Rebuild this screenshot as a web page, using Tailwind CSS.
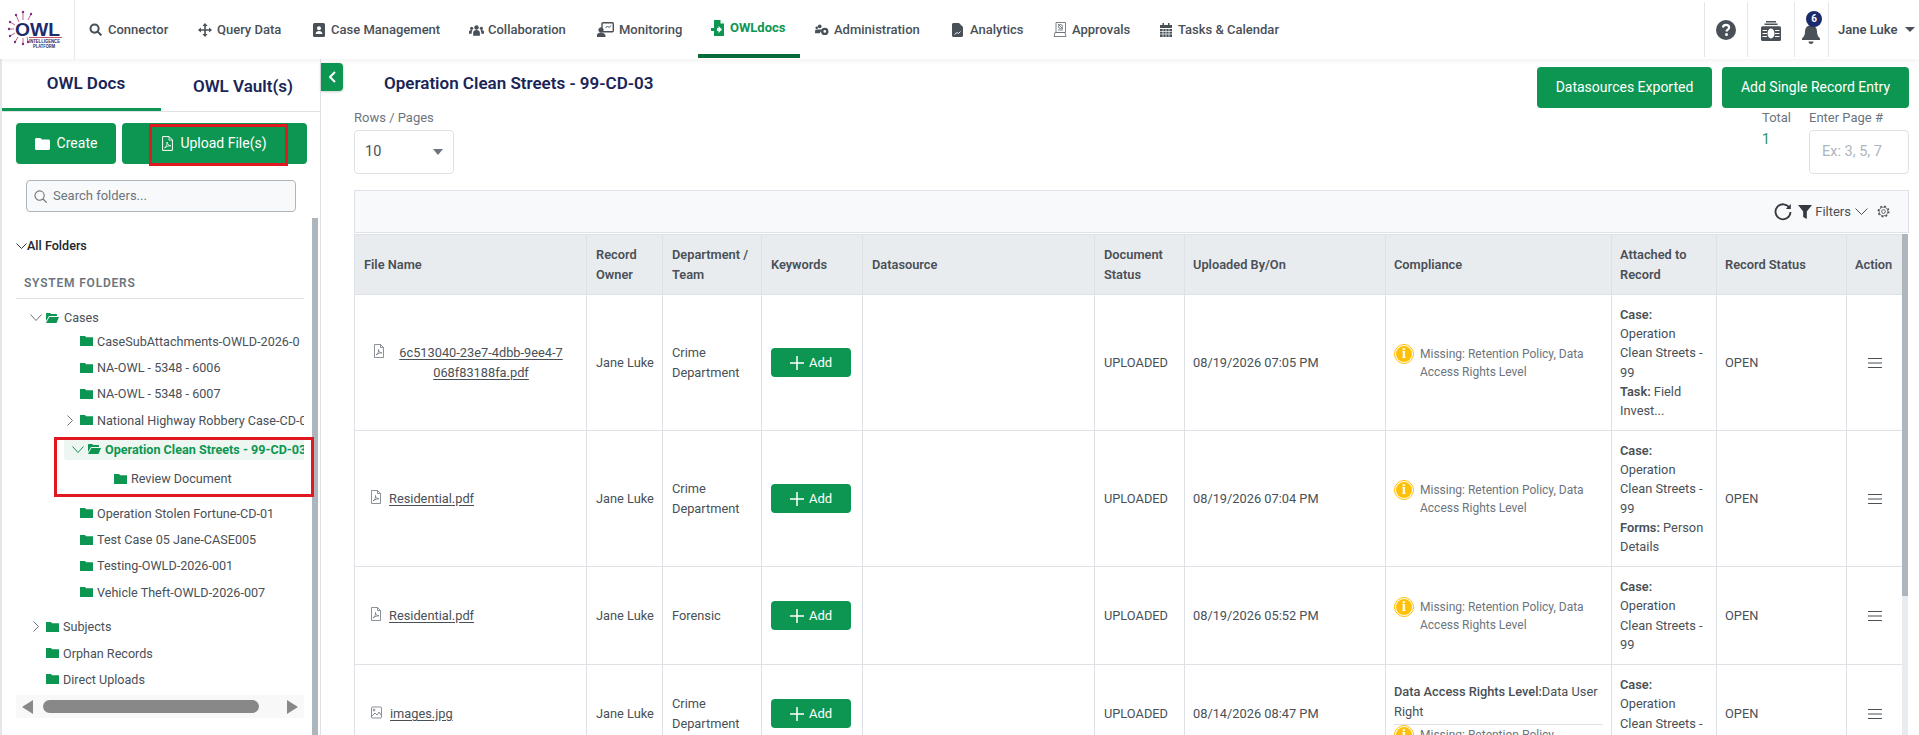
<!DOCTYPE html>
<html lang="en">
<head>
  <meta charset="UTF-8" />
  <title>OWLdocs</title>
  <script src="https://cdn.jsdelivr.net/npm/@tailwindcss/browser@4"></script>
</head>
<body class="h-[735px] overflow-hidden bg-white font-['Roboto',sans-serif] text-[12.8px] leading-[19.2px] text-[#495057]">

  <!-- Top nav -->
  <header class="relative z-10 flex h-[59px] items-stretch bg-white shadow-[0_2px_6px_rgba(0,0,0,0.06)]">
    <div class="w-[75px] shrink-0 border-r border-[#e4e6e9]">
      <svg class="h-[59px] w-[74px]" viewBox="0 0 74 59" fill="none">
        <g stroke="#b0406c" stroke-width=".8">
          <path d="M19 22 16 15M23 20V12M28 20l3-6M15 25l-5-3M14 29H9M15 33l-5 3M18 37l-3 5M23 38v6M27 37l1 5" />
        </g>
        <g fill="#7b2d86">
          <circle cx="16" cy="15" r="1.2" /><circle cx="23" cy="12" r="1.2" /><circle cx="31" cy="14" r="1.2" /><circle cx="10" cy="22" r="1.2" /><circle cx="9" cy="29" r="1.2" /><circle cx="10" cy="36" r="1.2" /><circle cx="15" cy="42" r="1.2" /><circle cx="23" cy="44" r="1.2" /><circle cx="28" cy="42" r="1.2" />
        </g>
        <path d="M29 37.500H62" stroke="#c2405a" stroke-width=".9" />
        <text x="15" y="35.500" font-family="Liberation Sans" font-size="19" font-weight="700" fill="#1f2a6b" textLength="45" lengthAdjust="spacingAndGlyphs">OWL</text>
        <text x="29" y="42.500" font-family="Liberation Sans" font-size="4.500" font-weight="700" fill="#1f2a6b" textLength="31" lengthAdjust="spacingAndGlyphs">INTELLIGENCE</text>
        <text x="33" y="47.500" font-family="Liberation Sans" font-size="4.500" font-weight="700" fill="#1f2a6b" textLength="22" lengthAdjust="spacingAndGlyphs">PLATFORM</text>
      </svg>
    </div>

    <nav class="flex flex-1 items-stretch text-[13px] font-medium">
      <a class="flex w-[109px] items-center gap-[6px] pl-[14px]">
        <svg class="h-[13px] w-[13px] fill-none stroke-[#495057] stroke-[2.2]" viewBox="0 0 14 14"><circle cx="6" cy="6" r="4.400" /><path d="m9.300 9.300 4 4" /></svg>Connector
      </a>
      <a class="flex w-[115px] items-center gap-[5px] pl-[14px]">
        <svg class="h-[14px] w-[14px] fill-[#495057]" viewBox="0 0 14 14"><path d="M7 0l2.600 2.900H7.800v3.300h3.300V4.400L14 7l-2.900 2.600V7.800H7.800v3.300h1.800L7 14l-2.600-2.900h1.800V7.800H2.900v1.800L0 7l2.900-2.600v1.800h3.300V2.900H4.400z" /></svg>Query Data
      </a>
      <a class="flex w-[156px] items-center gap-[6px] pl-[14px]">
        <svg class="h-[14px] w-[12px]" viewBox="0 0 12 14"><rect width="12" height="14" rx="1.500" fill="#495057" /><circle cx="6" cy="5.200" r="2" fill="#fff" /><path d="M2.600 11c0-2 1.600-3 3.400-3s3.400 1 3.400 3z" fill="#fff" /></svg>Case Management
      </a>
      <a class="flex w-[128px] items-center gap-[4px] pl-[14px]">
        <svg class="h-[12px] w-[15px] fill-[#495057]" viewBox="0 0 16 12"><circle cx="8" cy="3.400" r="2.400" /><circle cx="2.800" cy="4.200" r="1.700" /><circle cx="13.200" cy="4.200" r="1.700" /><path d="M4.400 12V9c0-1.800 1.500-2.900 3.600-2.900s3.600 1.100 3.600 2.900v3zM0 10V8c0-1 1-1.900 2.800-1.900.4 0 .6 0 .9.1-.5.6-.8 1.400-.8 2.300V10zM16 10V8c0-1-1-1.900-2.800-1.900-.4 0-.6 0-.9.1.5.6.8 1.400.8 2.300V10z" /></svg>Collaboration
      </a>
      <a class="flex w-[115px] items-center gap-[5px] pl-[14px]">
        <svg class="h-[15px] w-[17px] fill-none stroke-[#495057]" viewBox="0 0 17 15"><rect x="5" y=".7" width="11.300" height="9" rx="1" stroke-width="1.400" /><path d="m8.500 6 2-2 1.500 1.500L14 3.500" /><circle cx="4" cy="8" r="2.200" fill="#495057" /><path d="M0 15v-1.500C0 12 1.800 11 4 11s4 1 4 2.500V15z" fill="#495057" /></svg>Monitoring
      </a>
      <a class="relative flex w-[102px] items-center gap-[6px] pl-[13px] font-bold text-[#0d9651]">
        <svg class="-mt-[3px] h-[16px] w-[13px]" viewBox="0 0 13 16"><path d="M3 0h6.500L13 3.500V16H3v-5h4.500v2L11 9.500 7.500 6v2H3z" fill="#0d9651" /><path d="M0 8h6v3H0z" fill="#0d9651" /><path d="M9.500 0v3.500H13" fill="#fff" /></svg><span class="-mt-[3px]">OWLdocs</span>
        <span class="absolute inset-x-0 bottom-[1px] h-[4px] bg-[#056b3a]"></span>
      </a>
      <a class="ml-[1px] flex w-[137px] items-center gap-[5px] pl-[14px]">
        <svg class="h-[12px] w-[14px] fill-[#495057]" viewBox="0 0 15 13"><circle cx="5" cy="2.500" r="2" /><circle cx="1.800" cy="4" r="1.400" /><path d="M0 10V7.500C0 6.500 1 6 2 6h5v1L5 10z" /><circle cx="10.500" cy="8" r="4" /><circle cx="10.500" cy="8" r="1.400" fill="#fff" /></svg>Administration
      </a>
      <a class="flex w-[101px] items-center gap-[7px] pl-[14px]">
        <svg class="h-[14px] w-[11px] fill-[#495057]" viewBox="0 0 11 14"><path d="M0 1.500C0 .7.700 0 1.500 0H7l4 4v8.500c0 .8-.7 1.500-1.500 1.500h-8C.7 14 0 13.300 0 12.500z" /><path d="M2.500 11.500 5 9.500l1.500 1 2-2" stroke="#fff" fill="none" stroke-width=".9" /></svg>Analytics
      </a>
      <a class="flex w-[107px] items-center gap-[5px] pl-[14px]">
        <svg class="h-[15px] w-[14px] fill-none stroke-[#6c757d]" viewBox="0 0 14 15" stroke-width=".9"><path d="M3 .5h9.500v10H3z" /><circle cx="7.500" cy="4.500" r="2" /><path d="M5 8h5M1 14.500h12l-1-4H2z" /><path d="M5 2 10 7" /></svg>Approvals
      </a>
      <a class="flex items-center gap-[6px] pl-[14px]">
        <svg class="h-[14px] w-[12px] fill-[#495057]" viewBox="0 0 12 14"><path d="M2.500 0H4v2h4V0h1.500v2H12v3H0V2h2.500zM0 6h12v8H0z" /><path d="M0 8.500h12M0 11h12M3 6v8M6 6v8M9 6v8" stroke="#fff" stroke-width=".7" /></svg>Tasks &amp; Calendar
      </a>
    </nav>

    <div class="flex items-stretch">
      <div class="my-[2px] flex w-[43px] items-center justify-center border-l border-[#e4e6e9]">
        <svg class="h-[20px] w-[20px]" viewBox="0 0 20 20"><circle cx="10" cy="10" r="10" fill="#495057" /><path d="M7 7.600C7 5.800 8.400 4.800 10.100 4.800c1.700 0 3 1 3 2.600 0 2.200-2.500 2.200-2.500 4" fill="none" stroke="#fff" stroke-width="2.200" /><circle cx="10.500" cy="14.500" r="1.500" fill="#fff" /></svg>
      </div>
      <div class="my-[2px] flex w-[47px] items-center justify-center border-l border-[#e4e6e9]">
        <svg class="mt-[2px] h-[20px] w-[20px]" viewBox="0 0 20 20" fill="#495057"><path d="M5 0h10v1.400H5zM3.500 2.600h13V4h-13z" /><rect y="5.300" width="20" height="14.700" rx="1.500" /><ellipse cx="10" cy="12.500" rx="3.500" ry="5" fill="#fff" /><path d="M1.500 9.500H6M1.500 12.500H6M1.500 15.500H6M14 9.500h4.500M14 12.500h4.500M14 15.500h4.500" stroke="#fff" stroke-width="1.200" /></svg>
      </div>
      <div class="relative my-[2px] flex w-[34px] items-center justify-center border-l border-[#e4e6e9]">
        <svg class="ml-[-1px] mt-[8px] h-[21px] w-[18px] fill-[#495057]" viewBox="0 0 18 21"><path d="M9 0c.8 0 1.500.7 1.500 1.500v.7C13.500 3 15 5.500 15 8.500c0 3.500 1 5 3 7V17H0v-1.500c2-2 3-3.500 3-7C3 5.500 4.500 3 7.500 2.200v-.7C7.500.7 8.200 0 9 0zM6.500 18.500h5c0 1.500-1 2.500-2.500 2.500s-2.500-1-2.500-2.500z" /></svg>
        <span class="absolute left-[11px] top-[9px] flex h-[16px] w-[16px] items-center justify-center rounded-full bg-[#1a2a6c] text-[10px] font-bold leading-none text-white">6</span>
      </div>
      <div class="my-[2px] flex w-[91px] items-center border-l border-[#e4e6e9] pl-[9px] text-[13px] font-semibold">
        Jane Luke
        <span class="ml-[7px] h-0 w-0 border-x-[5px] border-t-[5px] border-x-transparent border-t-[#495057]"></span>
      </div>
    </div>
  </header>

  <div class="flex h-[676px]">
    <!-- Left panel -->
    <aside class="relative w-[321px] shrink-0 overflow-hidden border-l-2 border-r border-l-[#e4e7ea] border-r-[#dee2e6]">
      <div class="flex h-[53px] border-b border-[#dee2e6] text-[17px] font-semibold text-[#1a2557]">
        <div class="flex w-[159px] items-center justify-center border-b-[3px] border-[#0d9651] pl-[9px]">OWL Docs</div>
        <div class="flex w-[159px] items-center justify-center pl-[5px] pt-[3px]">OWL Vault(s)</div>
      </div>

      <div class="mt-[11px] flex gap-[6px] pl-[14px] pr-[13px] text-[14px] text-white">
        <button class="flex h-[41px] w-[100px] items-center justify-center gap-[7px] rounded-[4px] bg-[#0d9651]">
          <svg class="h-[12px] w-[15px] fill-white" viewBox="0 0 15 12"><path d="M1.500 0h4L7 1.500h6.500c.8 0 1.500.7 1.500 1.500v7.500c0 .8-.7 1.500-1.500 1.500h-12C.7 12 0 11.300 0 10.500v-9C0 .7.700 0 1.500 0z" /></svg>Create
        </button>
        <button class="flex h-[41px] flex-1 items-center justify-center gap-[7px] rounded-[4px] bg-[#0d9651]">
          <svg class="h-[15px] w-[11px] fill-none stroke-white" viewBox="0 0 11 15"><path d="M.6.6h6.500l3.300 3.300v10.500H.6z" /><path d="M7 .6v3.500h3.400M2.500 12c2-1.500 3-4 2.500-6 0 2 1.500 3.500 4 3.800-2-.2-4.500.6-6.500 2.200z" stroke-width=".8" /></svg>Upload File(s)
        </button>
      </div>

      <div class="ml-[24px] mt-[16px] flex h-[32px] w-[270px] items-center gap-[6px] rounded-[4px] border border-[#adb5bd] bg-[#f8f9fa] pl-[7px] text-[13px] text-[#6c757d]">
        <svg class="h-[13px] w-[13px] fill-none stroke-[#6c757d] stroke-[1.2]" viewBox="0 0 14 14"><circle cx="6" cy="6" r="5" /><path d="m9.700 9.700 4 4" /></svg>
        Search folders...
      </div>

      <div class="mt-[24px] h-[462px] text-[12.6px] leading-[19px]">
        <div class="flex h-[19px] items-center pl-[14px] font-medium text-[#212529]">
          <svg class="h-[6px] w-[11px] fill-none stroke-[#343a40]" viewBox="0 0 11 6"><path d="m.5.500 5 5 5-5" /></svg>All Folders
        </div>
        <div class="ml-[14px] mt-[19px] h-[25px] w-[288px] border-b border-[#dee2e6] pl-[8px] text-[12px] font-semibold tracking-[0.8px] text-[#6c757d]">SYSTEM FOLDERS</div>

        <!-- Cases -->
        <div class="mt-[8px] flex h-[21px] items-center pl-[28px]">
          <svg class="mr-[4px] h-[7px] w-[12px] fill-none stroke-[#6c757d]" viewBox="0 0 12 7"><path d="m.5.500 5.500 6 5.500-6" /></svg>
          <svg class="mr-[5px] h-[10px] w-[13px] fill-[#0d9651]" viewBox="0 0 13 10"><path d="M0 1c0-.6.400-1 1-1h3l1.200 1H10c.6 0 1 .4 1 1v1H3L0 8zM3.400 4H13l-2.500 6H0z" /></svg>Cases
        </div>

        <div class="relative w-[302px] overflow-hidden whitespace-nowrap">
          <div class="flex h-[26.4px] items-center pl-[78px]">
            <svg class="mr-[4px] h-[10px] w-[13px] shrink-0 fill-[#0d9651]" viewBox="0 0 13 10"><path d="M0 0h5l1.200 1.200H13V10H0z" /></svg>CaseSubAttachments-OWLD-2026-0
          </div>
          <div class="flex h-[26.4px] items-center pl-[78px]">
            <svg class="mr-[4px] h-[10px] w-[13px] shrink-0 fill-[#0d9651]" viewBox="0 0 13 10"><path d="M0 0h5l1.200 1.200H13V10H0z" /></svg>NA-OWL - 5348 - 6006
          </div>
          <div class="flex h-[26.4px] items-center pl-[78px]">
            <svg class="mr-[4px] h-[10px] w-[13px] shrink-0 fill-[#0d9651]" viewBox="0 0 13 10"><path d="M0 0h5l1.200 1.200H13V10H0z" /></svg>NA-OWL - 5348 - 6007
          </div>
          <div class="flex h-[26.4px] items-center pl-[65px]">
            <svg class="mr-[7px] h-[11px] w-[6px] shrink-0 fill-none stroke-[#6c757d]" viewBox="0 0 6 11"><path d="m.5.500 5 5-5 5" /></svg>
            <svg class="mr-[4px] h-[10px] w-[13px] shrink-0 fill-[#0d9651]" viewBox="0 0 13 10"><path d="M0 0h5l1.200 1.200H13V10H0z" /></svg>National Highway Robbery Case-CD-0
          </div>
          <div class="ml-[62px] mt-[5px] flex h-[21px] items-center rounded-l-[3px] bg-[#edf6f1] pl-[8px] font-bold text-[#0d9651]">
            <svg class="mr-[4px] h-[7px] w-[12px] shrink-0 fill-none stroke-[#0d9651]" viewBox="0 0 12 7"><path d="m.5.500 5.500 6 5.500-6" /></svg>
            <svg class="mr-[4px] h-[10px] w-[13px] shrink-0 fill-[#0d9651]" viewBox="0 0 13 10"><path d="M0 1c0-.6.400-1 1-1h3l1.200 1H10c.6 0 1 .4 1 1v1H3L0 8zM3.400 4H13l-2.500 6H0z" /></svg>Operation Clean Streets - 99-CD-03
          </div>
          <div class="mt-[6px] flex h-[26.4px] items-center pl-[112px]">
            <svg class="mr-[4px] h-[10px] w-[13px] shrink-0 fill-[#0d9651]" viewBox="0 0 13 10"><path d="M0 0h5l1.200 1.200H13V10H0z" /></svg>Review Document
          </div>
          <div class="mt-[8px] flex h-[26.4px] items-center pl-[78px]">
            <svg class="mr-[4px] h-[10px] w-[13px] shrink-0 fill-[#0d9651]" viewBox="0 0 13 10"><path d="M0 0h5l1.200 1.200H13V10H0z" /></svg>Operation Stolen Fortune-CD-01
          </div>
          <div class="flex h-[26.4px] items-center pl-[78px]">
            <svg class="mr-[4px] h-[10px] w-[13px] shrink-0 fill-[#0d9651]" viewBox="0 0 13 10"><path d="M0 0h5l1.200 1.200H13V10H0z" /></svg>Test Case 05 Jane-CASE005
          </div>
          <div class="flex h-[26.4px] items-center pl-[78px]">
            <svg class="mr-[4px] h-[10px] w-[13px] shrink-0 fill-[#0d9651]" viewBox="0 0 13 10"><path d="M0 0h5l1.200 1.200H13V10H0z" /></svg>Testing-OWLD-2026-001
          </div>
          <div class="flex h-[26.4px] items-center pl-[78px]">
            <svg class="mr-[4px] h-[10px] w-[13px] shrink-0 fill-[#0d9651]" viewBox="0 0 13 10"><path d="M0 0h5l1.200 1.200H13V10H0z" /></svg>Vehicle Theft-OWLD-2026-007
          </div>
          <div class="mt-[8px] flex h-[26.4px] items-center pl-[31px]">
            <svg class="mr-[7px] h-[11px] w-[6px] shrink-0 fill-none stroke-[#6c757d]" viewBox="0 0 6 11"><path d="m.5.500 5 5-5 5" /></svg>
            <svg class="mr-[4px] h-[10px] w-[13px] shrink-0 fill-[#0d9651]" viewBox="0 0 13 10"><path d="M0 0h5l1.200 1.200H13V10H0z" /></svg>Subjects
          </div>
          <div class="flex h-[26.4px] items-center pl-[44px]">
            <svg class="mr-[4px] h-[10px] w-[13px] shrink-0 fill-[#0d9651]" viewBox="0 0 13 10"><path d="M0 0h5l1.200 1.200H13V10H0z" /></svg>Orphan Records
          </div>
          <div class="flex h-[26.4px] items-center pl-[44px]">
            <svg class="mr-[4px] h-[10px] w-[13px] shrink-0 fill-[#0d9651]" viewBox="0 0 13 10"><path d="M0 0h5l1.200 1.200H13V10H0z" /></svg>Direct Uploads
          </div>
        </div>
      </div>

      <!-- Tree scrollbars -->
      <div class="absolute left-[14px] top-[636px] flex h-[23px] w-[288px] items-center bg-[#f8f8f8] px-[6px]">
        <span class="h-0 w-0 border-y-[7px] border-r-[11px] border-y-transparent border-r-[#888]"></span>
        <span class="ml-[10px] h-[13px] w-[217px] rounded-full bg-[#888]"></span>
        <span class="ml-[28px] h-0 w-0 border-y-[7px] border-l-[11px] border-y-transparent border-l-[#888]"></span>
      </div>
      <div class="absolute bottom-0 left-[310px] top-[159px] w-[6px] bg-[#adb5bd]"></div>

      <!-- Annotation boxes -->
      <div class="absolute left-[147px] top-[65px] h-[42px] w-[139px] border-[3px] border-[#e0181f]"></div>
      <div class="absolute left-[52px] top-[378px] h-[60px] w-[260px] border-[3px] border-[#e0181f]"></div>
    </aside>

    <!-- Main -->
    <main class="relative flex-1 pl-[33px] pr-[10px]">
      <button class="absolute left-0 top-[4px] flex h-[28px] w-[22px] items-center justify-center rounded-r-[4px] bg-[#0d9651] shadow-[0_1px_3px_rgba(0,0,0,0.2)]">
        <svg class="h-[12px] w-[7px] fill-none stroke-white stroke-2" viewBox="0 0 7 12"><path d="M6 1 1 6l5 5" /></svg>
      </button>

      <div class="flex h-[49px] items-start justify-between pt-[8px]">
        <h1 class="ml-[30px] mt-[6px] text-[17px] font-semibold leading-[20px] text-[#1a2557]">Operation Clean Streets - 99-CD-03</h1>
        <div class="flex gap-[10px] text-[14px] text-white">
          <button class="h-[41px] w-[175px] rounded-[4px] bg-[#0d9651]">Datasources Exported</button>
          <button class="h-[41px] w-[187px] rounded-[4px] bg-[#0d9651]">Add Single Record Entry</button>
        </div>
      </div>

      <div class="flex h-[82px] justify-between text-[13px] text-[#6c757d]">
        <div>
          <div class="h-[22px] leading-[19px]">Rows / Pages</div>
          <div class="flex h-[44px] w-[100px] items-center justify-between rounded-[4px] border border-[#dee2e6] px-[10px] text-[14.5px] text-[#495057]">
            10 <span class="h-0 w-0 border-x-[5px] border-t-[6px] border-x-transparent border-t-[#6c757d]"></span>
          </div>
        </div>
        <div class="flex gap-[18px]">
          <div class="w-[29px]">
            <div class="h-[22px] leading-[19px]">Total</div>
            <div class="text-[14px] text-[#2c8f6a]">1</div>
          </div>
          <div class="w-[100px]">
            <div class="h-[22px] leading-[19px]">Enter Page #</div>
            <div class="flex h-[44px] items-center rounded-[4px] border border-[#dee2e6] pl-[12px] text-[14.5px] text-[#adb5bd]">Ex: 3, 5, 7</div>
          </div>
        </div>
      </div>

      <!-- Table panel -->
      <div class="relative h-[545px] overflow-hidden">
        <div class="flex h-[43px] items-center justify-end border border-[#dee2e6] bg-[#f8f9fa] pr-[18px]">
          <svg class="h-[18px] w-[18px] fill-none stroke-[#343a40] stroke-[1.8]" viewBox="0 0 18 18"><path d="M15.500 5A7.500 7.500 0 1 0 16.500 9" /><path d="M16.800 1v5h-5" fill="#343a40" stroke="none" /></svg>
          <svg class="ml-[6px] h-[14px] w-[14px] fill-[#343a40]" viewBox="0 0 14 14"><path d="M0 0h14L8.800 6.500V14L5.200 12V6.500z" /></svg>
          <span class="ml-[3px] text-[13px]">Filters</span>
          <svg class="ml-[4px] h-[7px] w-[13px] fill-none stroke-[#495057]" viewBox="0 0 13 7"><path d="m.5.500 6 6 6-6" /></svg>
          <svg class="ml-[9px] h-[13px] w-[13px] fill-none stroke-[#495057]" viewBox="0 0 14 14"><circle cx="7" cy="7" r="2" stroke-width=".9" /><circle cx="7" cy="7" r="4.700" stroke-width=".9" /><circle cx="7" cy="7" r="5.700" stroke-width="1.500" stroke-dasharray="2 2.480" /></svg>
        </div>

        <table class="mt-[1px] w-[1548px] table-fixed border-collapse">
          <colgroup>
            <col class="w-[232px]" /><col class="w-[76px]" /><col class="w-[99px]" /><col class="w-[101px]" /><col class="w-[232px]" /><col class="w-[90px]" /><col class="w-[201px]" /><col class="w-[226px]" /><col class="w-[105px]" /><col class="w-[130px]" /><col class="w-[56px]" />
          </colgroup>
          <thead class="bg-[#e9ecef] text-left text-[12.8px] leading-[20px]">
            <tr class="h-[60px]">
              <th class="border border-[#dee2e6] px-[9px] font-semibold">File Name</th>
              <th class="border border-[#dee2e6] px-[9px] font-semibold">Record Owner</th>
              <th class="border border-[#dee2e6] px-[9px] font-semibold">Department / Team</th>
              <th class="border border-[#dee2e6] px-[9px] font-semibold">Keywords</th>
              <th class="border border-[#dee2e6] px-[9px] font-semibold">Datasource</th>
              <th class="border border-[#dee2e6] px-[9px] font-semibold">Document Status</th>
              <th class="border border-[#dee2e6] px-[8px] font-semibold">Uploaded By/On</th>
              <th class="border border-[#dee2e6] px-[8px] font-semibold">Compliance</th>
              <th class="border border-[#dee2e6] px-[8px] font-semibold">Attached to Record</th>
              <th class="border border-[#dee2e6] px-[8px] font-semibold">Record Status</th>
              <th class="border border-[#dee2e6] px-[8px] font-semibold">Action</th>
            </tr>
          </thead>
          <tbody>
            <tr class="h-[136px]">
              <td class="border border-[#dee2e6] px-[9px]">
                <div class="flex items-start pl-[10px]">
                  <svg class="mr-[7px] mt-[1px] h-[14px] w-[10px] shrink-0 fill-none stroke-[#6c757d]" viewBox="0 0 10 14" stroke-width=".8"><path d="M.5.500h6l3 3v10H.5zM6.500.500v3h3M2 11c2-1.500 2.800-3.500 2.500-5.500 0 1.800 1.200 3 3.500 3.300-2-.1-4 .6-6 2.200z" /></svg>
                  <a class="w-[180px] text-center underline underline-offset-2">6c513040-23e7-4dbb-9ee4-7<br />068f83188fa.pdf</a>
                </div>
              </td>
              <td class="whitespace-nowrap border border-[#dee2e6] px-[9px]">Jane Luke</td>
              <td class="border border-[#dee2e6] px-[9px]">Crime Department</td>
              <td class="border border-[#dee2e6] px-[9px]">
                <button class="flex h-[29px] w-[80px] items-center justify-center gap-[5px] rounded-[4px] bg-[#0d9651] text-[13px] text-white"><svg class="h-[14px] w-[14px] stroke-white stroke-[1.5]" viewBox="0 0 14 14"><path d="M7 0v14M0 7h14" /></svg>Add</button>
              </td>
              <td class="border border-[#dee2e6] px-[9px]"></td>
              <td class="border border-[#dee2e6] px-[9px]">UPLOADED</td>
              <td class="border border-[#dee2e6] px-[8px]">08/19/2026 07:05 PM</td>
              <td class="border border-[#dee2e6] px-[8px]">
                <div class="flex items-start gap-[6px] text-[12px] leading-[18px] text-[#6c757d]">
                  <span class="mt-[-1px] flex h-[20px] w-[20px] shrink-0 items-center justify-center rounded-full border border-[#ffc107] p-[1px]"><span class="flex h-full w-full items-center justify-center rounded-full bg-[#ffc107] font-['Liberation_Serif'] text-[14px] font-bold text-white">i</span></span>
                  <span>Missing: Retention Policy, Data Access Rights Level</span>
                </div>
              </td>
              <td class="border border-[#dee2e6] px-[8px]"><b class="font-semibold">Case:</b><br />Operation Clean Streets - 99<br /><b class="font-semibold">Task:</b> Field Invest...</td>
              <td class="border border-[#dee2e6] px-[8px]">OPEN</td>
              <td class="border border-[#dee2e6] px-[8px]"><svg class="mx-auto h-[10px] w-[14px] stroke-[#495057]" viewBox="0 0 14 10"><path d="M0 .5h14M0 5h14M0 9.500h14" /></svg></td>
            </tr>
            <tr class="h-[136px]">
              <td class="border border-[#dee2e6] px-[9px]">
                <div class="flex items-start pl-[7px]">
                  <svg class="mr-[8px] mt-[1px] h-[14px] w-[10px] shrink-0 fill-none stroke-[#6c757d]" viewBox="0 0 10 14" stroke-width=".8"><path d="M.5.500h6l3 3v10H.5zM6.500.500v3h3M2 11c2-1.500 2.800-3.500 2.500-5.500 0 1.800 1.200 3 3.500 3.300-2-.1-4 .6-6 2.200z" /></svg>
                  <a class="underline underline-offset-2">Residential.pdf</a>
                </div>
              </td>
              <td class="whitespace-nowrap border border-[#dee2e6] px-[9px]">Jane Luke</td>
              <td class="border border-[#dee2e6] px-[9px]">Crime Department</td>
              <td class="border border-[#dee2e6] px-[9px]">
                <button class="flex h-[29px] w-[80px] items-center justify-center gap-[5px] rounded-[4px] bg-[#0d9651] text-[13px] text-white"><svg class="h-[14px] w-[14px] stroke-white stroke-[1.5]" viewBox="0 0 14 14"><path d="M7 0v14M0 7h14" /></svg>Add</button>
              </td>
              <td class="border border-[#dee2e6] px-[9px]"></td>
              <td class="border border-[#dee2e6] px-[9px]">UPLOADED</td>
              <td class="border border-[#dee2e6] px-[8px]">08/19/2026 07:04 PM</td>
              <td class="border border-[#dee2e6] px-[8px]">
                <div class="flex items-start gap-[6px] text-[12px] leading-[18px] text-[#6c757d]">
                  <span class="mt-[-1px] flex h-[20px] w-[20px] shrink-0 items-center justify-center rounded-full border border-[#ffc107] p-[1px]"><span class="flex h-full w-full items-center justify-center rounded-full bg-[#ffc107] font-['Liberation_Serif'] text-[14px] font-bold text-white">i</span></span>
                  <span>Missing: Retention Policy, Data Access Rights Level</span>
                </div>
              </td>
              <td class="border border-[#dee2e6] px-[8px]"><b class="font-semibold">Case:</b><br />Operation Clean Streets - 99<br /><b class="font-semibold">Forms:</b> Person Details</td>
              <td class="border border-[#dee2e6] px-[8px]">OPEN</td>
              <td class="border border-[#dee2e6] px-[8px]"><svg class="mx-auto h-[10px] w-[14px] stroke-[#495057]" viewBox="0 0 14 10"><path d="M0 .5h14M0 5h14M0 9.500h14" /></svg></td>
            </tr>
            <tr class="h-[98px]">
              <td class="border border-[#dee2e6] px-[9px]">
                <div class="flex items-start pl-[7px]">
                  <svg class="mr-[8px] mt-[1px] h-[14px] w-[10px] shrink-0 fill-none stroke-[#6c757d]" viewBox="0 0 10 14" stroke-width=".8"><path d="M.5.500h6l3 3v10H.5zM6.500.500v3h3M2 11c2-1.500 2.800-3.500 2.500-5.500 0 1.800 1.200 3 3.500 3.300-2-.1-4 .6-6 2.200z" /></svg>
                  <a class="underline underline-offset-2">Residential.pdf</a>
                </div>
              </td>
              <td class="whitespace-nowrap border border-[#dee2e6] px-[9px]">Jane Luke</td>
              <td class="border border-[#dee2e6] px-[9px]">Forensic</td>
              <td class="border border-[#dee2e6] px-[9px]">
                <button class="flex h-[29px] w-[80px] items-center justify-center gap-[5px] rounded-[4px] bg-[#0d9651] text-[13px] text-white"><svg class="h-[14px] w-[14px] stroke-white stroke-[1.5]" viewBox="0 0 14 14"><path d="M7 0v14M0 7h14" /></svg>Add</button>
              </td>
              <td class="border border-[#dee2e6] px-[9px]"></td>
              <td class="border border-[#dee2e6] px-[9px]">UPLOADED</td>
              <td class="border border-[#dee2e6] px-[8px]">08/19/2026 05:52 PM</td>
              <td class="border border-[#dee2e6] px-[8px]">
                <div class="flex items-start gap-[6px] text-[12px] leading-[18px] text-[#6c757d]">
                  <span class="mt-[-1px] flex h-[20px] w-[20px] shrink-0 items-center justify-center rounded-full border border-[#ffc107] p-[1px]"><span class="flex h-full w-full items-center justify-center rounded-full bg-[#ffc107] font-['Liberation_Serif'] text-[14px] font-bold text-white">i</span></span>
                  <span>Missing: Retention Policy, Data Access Rights Level</span>
                </div>
              </td>
              <td class="border border-[#dee2e6] px-[8px]"><b class="font-semibold">Case:</b><br />Operation Clean Streets - 99</td>
              <td class="border border-[#dee2e6] px-[8px]">OPEN</td>
              <td class="border border-[#dee2e6] px-[8px]"><svg class="mx-auto h-[10px] w-[14px] stroke-[#495057]" viewBox="0 0 14 10"><path d="M0 .5h14M0 5h14M0 9.500h14" /></svg></td>
            </tr>
            <tr class="h-[98px]">
              <td class="border border-[#dee2e6] px-[9px]">
                <div class="flex items-start pl-[7px]">
                  <svg class="mr-[8px] mt-[2px] h-[13px] w-[11px] shrink-0 fill-none stroke-[#6c757d]" viewBox="0 0 11 13" stroke-width=".8"><rect x=".5" y="1" width="10" height="11" rx="1" /><circle cx="3" cy="4" r="1" /><path d="m1 10 3-3 2 2 2-3 2 3" /></svg>
                  <a class="underline underline-offset-2">images.jpg</a>
                </div>
              </td>
              <td class="whitespace-nowrap border border-[#dee2e6] px-[9px]">Jane Luke</td>
              <td class="border border-[#dee2e6] px-[9px]">Crime Department</td>
              <td class="border border-[#dee2e6] px-[9px]">
                <button class="flex h-[29px] w-[80px] items-center justify-center gap-[5px] rounded-[4px] bg-[#0d9651] text-[13px] text-white"><svg class="h-[14px] w-[14px] stroke-white stroke-[1.5]" viewBox="0 0 14 14"><path d="M7 0v14M0 7h14" /></svg>Add</button>
              </td>
              <td class="border border-[#dee2e6] px-[9px]"></td>
              <td class="border border-[#dee2e6] px-[9px]">UPLOADED</td>
              <td class="border border-[#dee2e6] px-[8px]">08/14/2026 08:47 PM</td>
              <td class="border border-[#dee2e6] px-[8px]">
                <div class="border-b border-[#dee2e6] pb-[3px] font-medium">Data Access Rights Level:<span class="font-normal">Data User Right</span></div>
                <div class="mt-[1px] flex items-start gap-[6px] pr-[40px] text-[12px] leading-[18px] text-[#6c757d]">
                  <span class="mt-[-1px] flex h-[20px] w-[20px] shrink-0 items-center justify-center rounded-full border border-[#ffc107] p-[1px]"><span class="flex h-full w-full items-center justify-center rounded-full bg-[#ffc107] font-['Liberation_Serif'] text-[14px] font-bold text-white">i</span></span>
                  <span>Missing: Retention Policy</span>
                </div>
              </td>
              <td class="border border-[#dee2e6] px-[8px]"><b class="font-semibold">Case:</b><br />Operation Clean Streets - 99</td>
              <td class="border border-[#dee2e6] px-[8px]">OPEN</td>
              <td class="border border-[#dee2e6] px-[8px]"><svg class="mx-auto h-[10px] w-[14px] stroke-[#495057]" viewBox="0 0 14 10"><path d="M0 .5h14M0 5h14M0 9.500h14" /></svg></td>
            </tr>
          </tbody>
        </table>

        <!-- Table scrollbar -->
        <div class="absolute bottom-0 left-[1548px] top-[44px] w-[6px] bg-[#e9ecef]">
          <div class="h-[362px] bg-[#adb5bd]"></div>
        </div>
      </div>
    </main>
  </div>
</body>
</html>
